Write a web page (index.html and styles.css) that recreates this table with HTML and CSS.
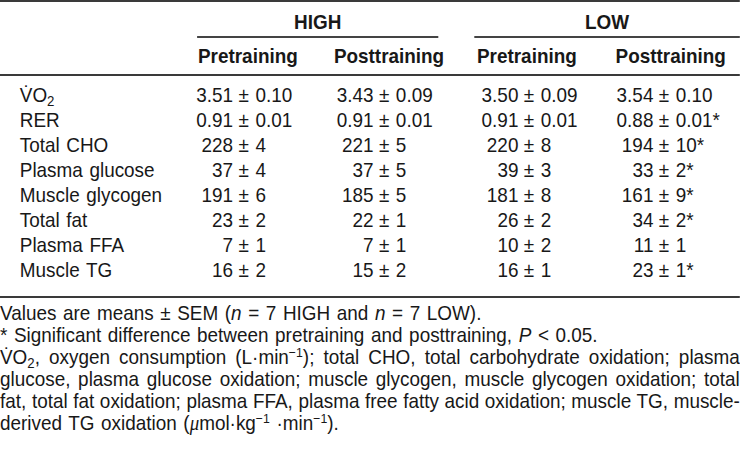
FILE: index.html
```html
<!DOCTYPE html>
<html>
<head>
<meta charset="utf-8">
<link rel="stylesheet" href="styles.css">
</head>
<body>
<div class="page">
  <div class="group-row">
    <div></div>
    <div class="group">HIGH</div>
    <div></div>
    <div class="group">LOW</div>
  </div>
  <div class="row head">
    <div class="lab"></div>
    <div class="h h1">Pretraining</div>
    <div class="h h2">Posttraining</div>
    <div class="h h3">Pretraining</div>
    <div class="h h4">Posttraining</div>
  </div>
  <div class="body">
    <div class="row">
      <div class="lab">V&#x307;O<sub>2</sub></div>
      <div class="v v1"><span class="a">3.51</span><span class="b">± 0.10</span></div>
      <div class="v v2"><span class="a">3.43</span><span class="b">± 0.09</span></div>
      <div class="v v3"><span class="a">3.50</span><span class="b">± 0.09</span></div>
      <div class="v v4"><span class="a">3.54</span><span class="b">± 0.10</span></div>
    </div>
    <div class="row">
      <div class="lab">RER</div>
      <div class="v v1"><span class="a">0.91</span><span class="b">± 0.01</span></div>
      <div class="v v2"><span class="a">0.91</span><span class="b">± 0.01</span></div>
      <div class="v v3"><span class="a">0.91</span><span class="b">± 0.01</span></div>
      <div class="v v4"><span class="a">0.88</span><span class="b">± 0.01*</span></div>
    </div>
    <div class="row">
      <div class="lab">Total CHO</div>
      <div class="v v1"><span class="a">228</span><span class="b">± 4</span></div>
      <div class="v v2"><span class="a">221</span><span class="b">± 5</span></div>
      <div class="v v3"><span class="a">220</span><span class="b">± 8</span></div>
      <div class="v v4"><span class="a">194</span><span class="b">± 10*</span></div>
    </div>
    <div class="row">
      <div class="lab">Plasma glucose</div>
      <div class="v v1"><span class="a">37</span><span class="b">± 4</span></div>
      <div class="v v2"><span class="a">37</span><span class="b">± 5</span></div>
      <div class="v v3"><span class="a">39</span><span class="b">± 3</span></div>
      <div class="v v4"><span class="a">33</span><span class="b">± 2*</span></div>
    </div>
    <div class="row">
      <div class="lab">Muscle glycogen</div>
      <div class="v v1"><span class="a">191</span><span class="b">± 6</span></div>
      <div class="v v2"><span class="a">185</span><span class="b">± 5</span></div>
      <div class="v v3"><span class="a">181</span><span class="b">± 8</span></div>
      <div class="v v4"><span class="a">161</span><span class="b">± 9*</span></div>
    </div>
    <div class="row">
      <div class="lab">Total fat</div>
      <div class="v v1"><span class="a">23</span><span class="b">± 2</span></div>
      <div class="v v2"><span class="a">22</span><span class="b">± 1</span></div>
      <div class="v v3"><span class="a">26</span><span class="b">± 2</span></div>
      <div class="v v4"><span class="a">34</span><span class="b">± 2*</span></div>
    </div>
    <div class="row">
      <div class="lab">Plasma FFA</div>
      <div class="v v1"><span class="a">7</span><span class="b">± 1</span></div>
      <div class="v v2"><span class="a">7</span><span class="b">± 1</span></div>
      <div class="v v3"><span class="a">10</span><span class="b">± 2</span></div>
      <div class="v v4"><span class="a">11</span><span class="b">± 1</span></div>
    </div>
    <div class="row">
      <div class="lab">Muscle TG</div>
      <div class="v v1"><span class="a">16</span><span class="b">± 2</span></div>
      <div class="v v2"><span class="a">15</span><span class="b">± 2</span></div>
      <div class="v v3"><span class="a">16</span><span class="b">± 1</span></div>
      <div class="v v4"><span class="a">23</span><span class="b">± 1*</span></div>
    </div>
  </div>
  <div class="notes">
    <p>Values are means ± SEM (<i>n</i> = 7 HIGH and <i>n</i> = 7 LOW).</p>
    <p>* Significant difference between pretraining and posttraining, <i>P</i> &lt; 0.05.</p>
    <p class="j">V&#x307;O<sub>2</sub>, oxygen consumption (L·min<sup>−1</sup>); total CHO, total carbohydrate oxidation; plasma</p>
    <p class="j">glucose, plasma glucose oxidation; muscle glycogen, muscle glycogen oxidation; total</p>
    <p class="j">fat, total fat oxidation; plasma FFA, plasma free fatty acid oxidation; muscle TG, muscle-</p>
    <p>derived TG oxidation (<span class="mu">μ</span>mol·kg<sup>−1</sup> ·min<sup>−1</sup>).</p>
  </div>
</div>
</body>
</html>
```

FILE: styles.css
```css
html, body {
  margin: 0;
  padding: 0;
  background: #fff;
  overflow: hidden;
}
body {
  width: 740px;
  height: 462px;
  font-family: "Liberation Sans", Arial, sans-serif;
  font-size: 21px;
  word-spacing: 1.5px;
  color: #181818;
}
/* condensed type: the sheet is laid out at 1/0.9 width and squeezed horizontally */
.page {
  width: 822px;
  transform: scaleX(0.9);
  transform-origin: 0 0;
  border-top: 2px solid #3a3a3a;
}
.group-row {
  display: grid;
  grid-template-columns: 219px 268px 40px 295px;
  height: 36px;
}
.group {
  font-weight: bold;
  text-align: center;
  border-bottom: 2px solid #444;
  padding-top: 6px;
  line-height: 28px;
}
.row {
  display: grid;
  grid-template-columns: 178px 167px 155px 156px 166px;
  height: 25px;
  line-height: 25px;
  white-space: nowrap;
}
.row.head {
  height: 36px;
  line-height: 36px;
  border-bottom: 2px solid #3a3a3a;
  font-weight: bold;
  word-spacing: 0;
}
.h1 { padding-left: 42px; }
.h2 { padding-left: 26px; }
.h3 { padding-left: 30px; }
.h4 { padding-left: 28px; }
.body {
  padding-top: 6px;
  padding-bottom: 14px;
  border-bottom: 2px solid #3a3a3a;
}
.lab { padding-left: 22px; }
sub {
  font-size: 0.7em;
  vertical-align: -0.25em;
  line-height: 0;
}
sup {
  font-size: 0.65em;
  vertical-align: 0.55em;
  line-height: 0;
}
.a {
  display: inline-block;
  width: 67px;
  text-align: right;
}
.b { padding-left: 6px; }
.v1 { padding-left: 14px; }
.v2 { padding-left: 3px; }
.v3 { padding-left: 9px; }
.v4 { padding-left: 3px; }
.notes {
  padding-top: 4px;
}
.notes p {
  margin: 0;
  line-height: 22px;
  white-space: nowrap;
}
.notes p.j {
  word-spacing: -2px;
  text-align: justify;
  text-align-last: justify;
}
.mu {
  font-family: "Liberation Serif", serif;
  font-style: italic;
}
```
